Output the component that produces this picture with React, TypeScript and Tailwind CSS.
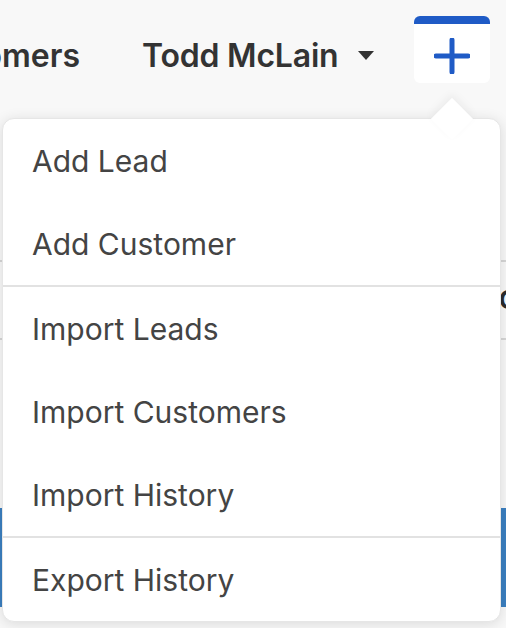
const groups = [
  ['Add Lead', 'Add Customer'],
  ['Import Leads', 'Import Customers', 'Import History'],
  ['Export History'],
]

export default function App() {
  return (
    <div
      className="relative w-[506px] h-[628px] overflow-hidden bg-[#f8f8f8]"
      style={{ fontFamily: 'Inter, "Noto Sans", sans-serif' }}
    >
      {/* header */}
      <div className="flex items-center h-[111px] text-[32px] font-semibold text-[#333] leading-none whitespace-nowrap">
        <div className="w-[80px] flex justify-end">
          <span>Customers</span>
        </div>
        <span className="ml-[62px] tracking-[-0.2px]">Todd McLain</span>
        <svg width="16" height="9" viewBox="0 0 16 9" className="ml-[19px]">
          <path d="M0 0 L16 0 L8 9 Z" fill="#333" />
        </svg>
        <div className="self-start ml-[40px] mt-[16px] w-[76px] h-[67px] bg-white rounded-[6px] border-t-[8px] border-[#1f5bc6] flex items-center justify-center">
          <svg width="36" height="36" viewBox="0 0 36 36" className="mt-[4px]">
            <path d="M18 2 V34 M2 18 H34" stroke="#1f5bc6" strokeWidth="5" strokeLinecap="round" />
          </svg>
        </div>
      </div>

      {/* background page content */}
      <div className="mt-[149px] h-[80px] border-t-2 border-b-2 border-[#d6d6d6] flex items-center justify-end">
        <span className="mr-[-12px] text-[26px] font-bold text-[#2b2b2b] leading-none">C</span>
      </div>
      <div className="h-[168px]" />
      <div className="h-[99px] bg-[#3b7fc0]" />

      {/* dropdown */}
      <div className="absolute left-[2px] top-[118px] w-[499px] bg-white rounded-[12px] border border-[#e6e6e6] shadow-[0_2px_14px_rgba(0,0,0,0.12)]">
        <div className="absolute -top-[15px] left-[434px] w-[30px] h-[30px] rotate-45 bg-white shadow-[-3px_-3px_8px_rgba(0,0,0,0.05)]" />
        <div className="relative flex flex-col">
          {groups.map((g, gi) => (
            <div key={gi} className={gi > 0 ? 'border-t-2 border-[#e2e2e2]' : ''}>
              {g.map((item) => (
                <div key={item} className="h-[83px] flex items-center pl-[29px] text-[30px] text-[#444] leading-none">
                  {item}
                </div>
              ))}
            </div>
          ))}
        </div>
      </div>
    </div>
  )
}
